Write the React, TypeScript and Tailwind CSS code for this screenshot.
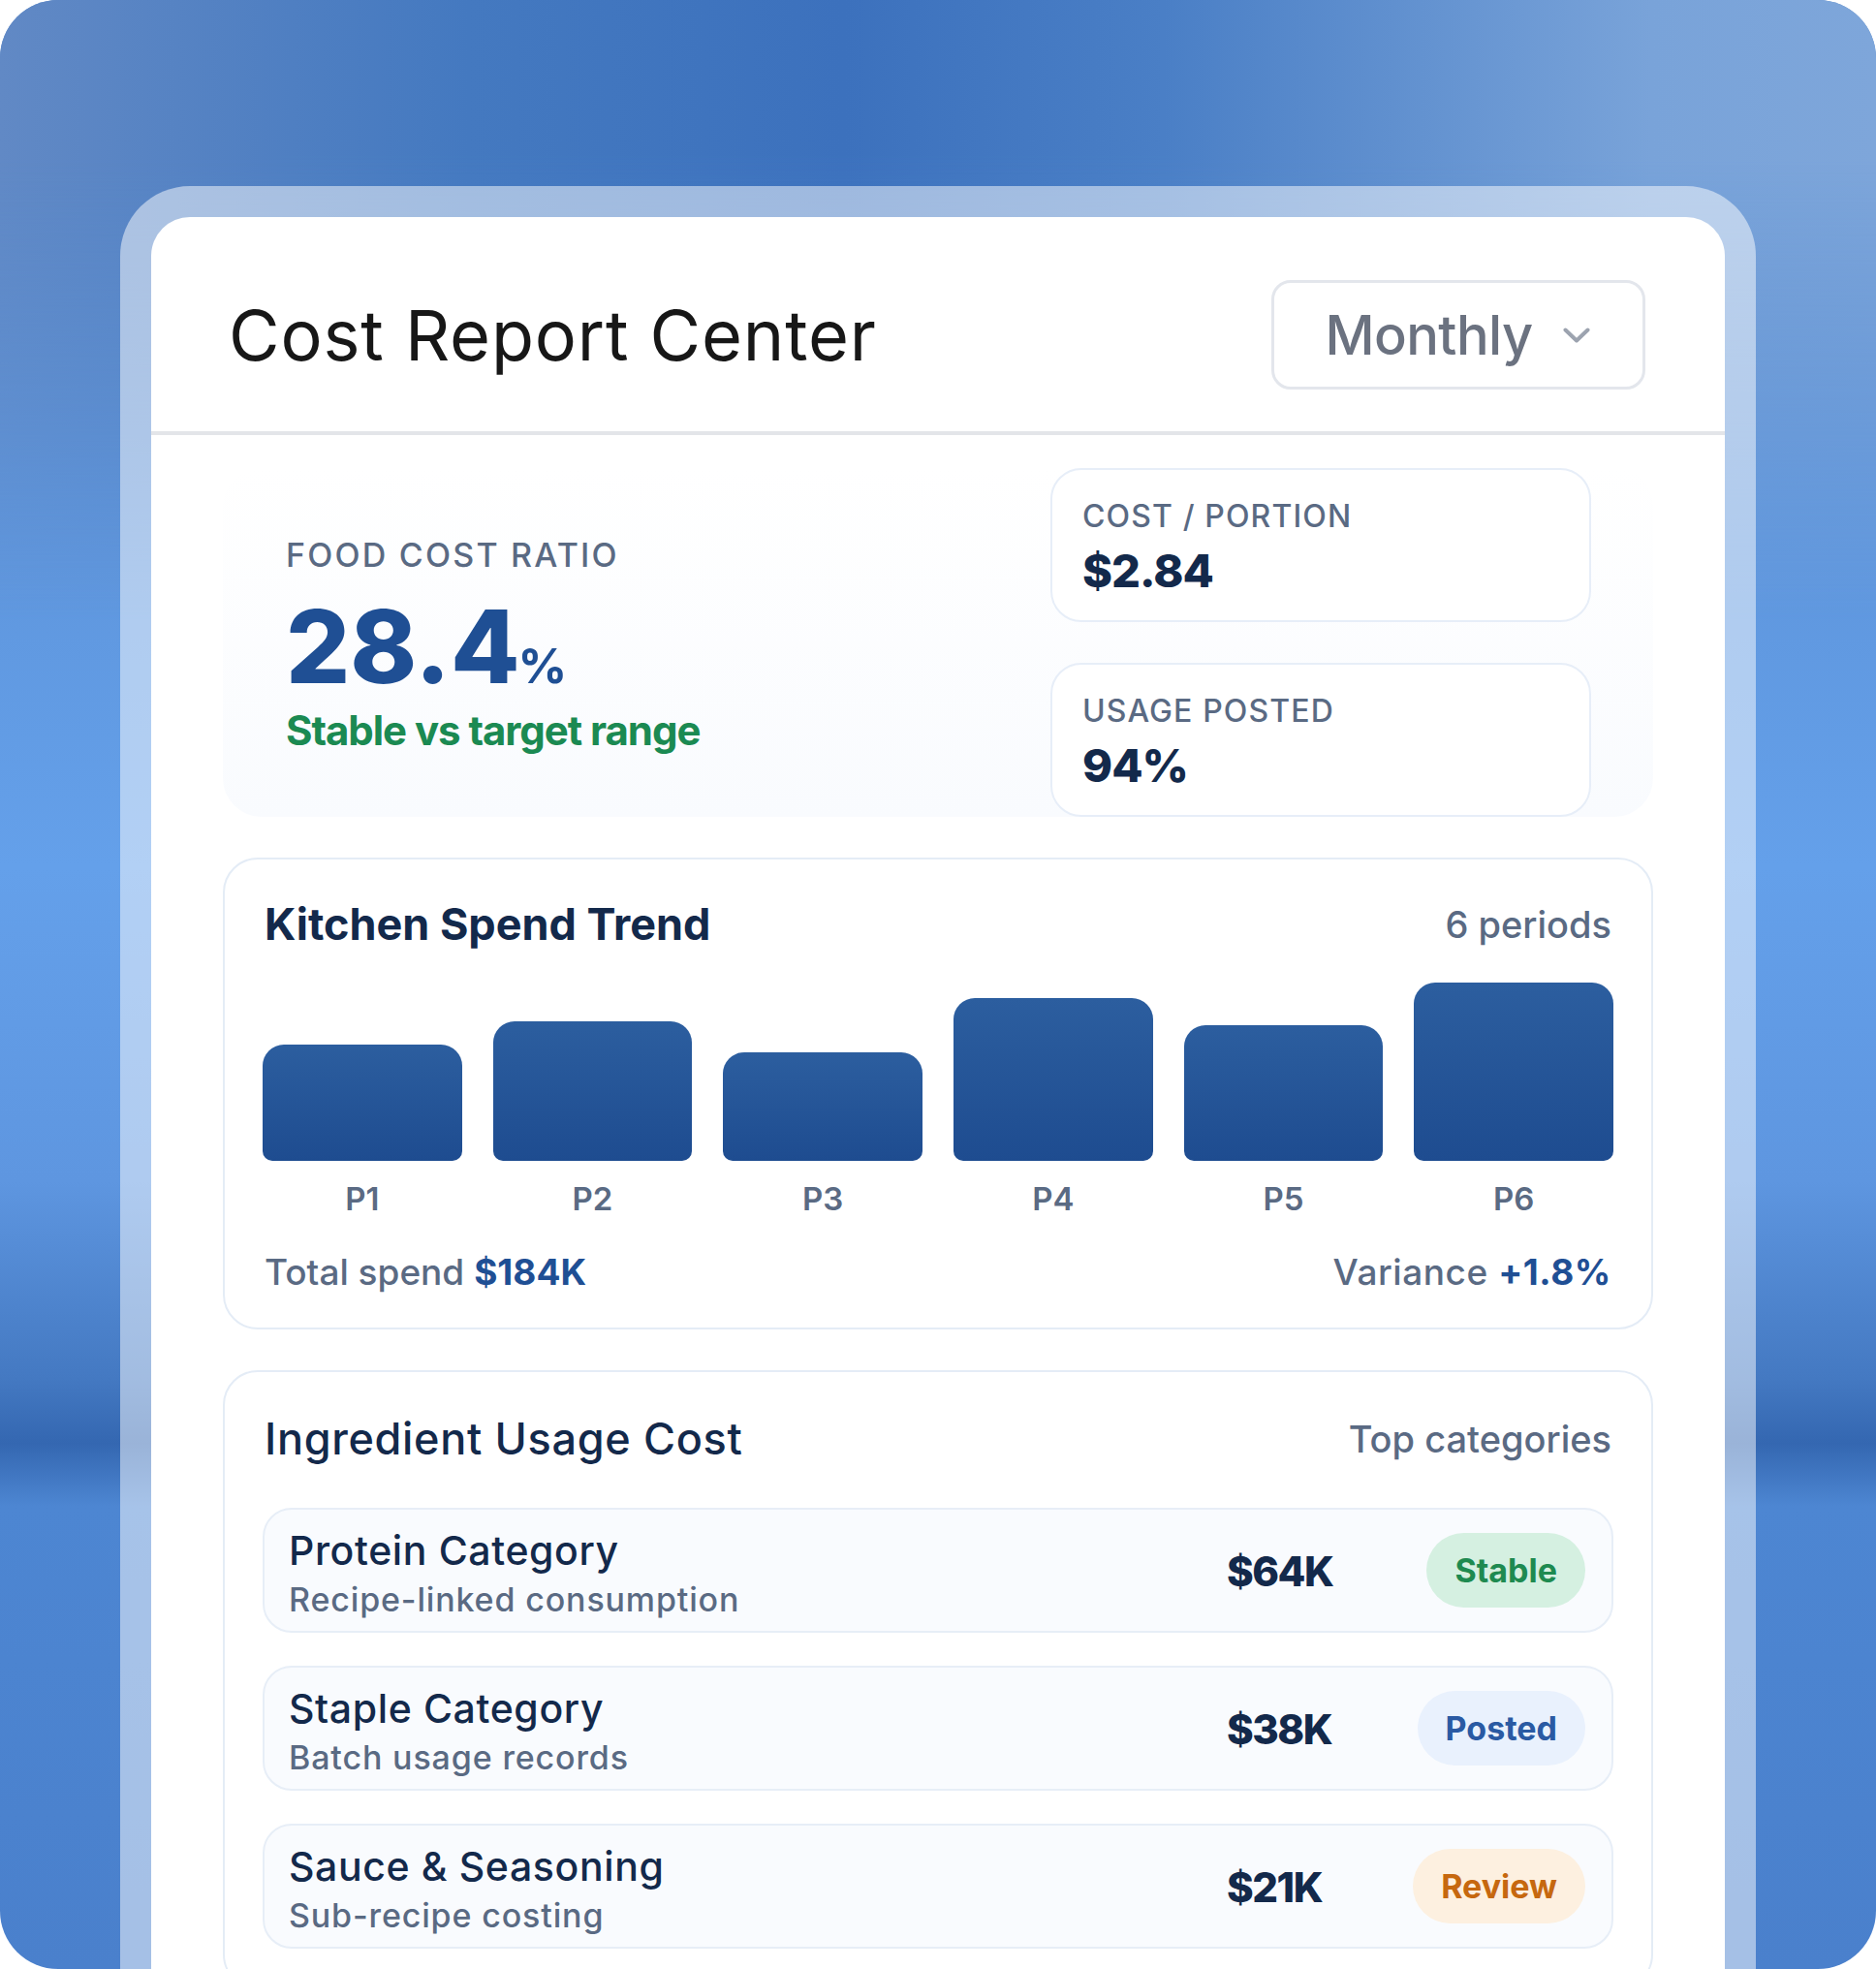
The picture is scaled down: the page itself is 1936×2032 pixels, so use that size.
import React from "react";

const bars = [
  { label: "P1", h: 120 },
  { label: "P2", h: 144 },
  { label: "P3", h: 112 },
  { label: "P4", h: 168 },
  { label: "P5", h: 140 },
  { label: "P6", h: 184 },
];

type Tone = "green" | "blue" | "amber";

const rows: { name: string; sub: string; amount: string; status: string; tone: Tone }[] = [
  { name: "Protein Category", sub: "Recipe-linked consumption", amount: "$64K", status: "Stable", tone: "green" },
  { name: "Staple Category", sub: "Batch usage records", amount: "$38K", status: "Posted", tone: "blue" },
  { name: "Sauce & Seasoning", sub: "Sub-recipe costing", amount: "$21K", status: "Review", tone: "amber" },
];

const toneClass: Record<Tone, string> = {
  green: "bg-[#d5f0e1] text-[#1e8a50]",
  blue: "bg-[#e9f1fd] text-[#2a5aa3]",
  amber: "bg-[#fdf0e0] text-[#c6680f]",
};

function Chevron() {
  return (
    <svg width="28" height="16" viewBox="0 0 28 16" fill="none" aria-hidden="true">
      <path d="M2.5 2.5 L14 13.5 L25.5 2.5" stroke="#9ca3af" strokeWidth="4" strokeLinecap="round" strokeLinejoin="round" />
    </svg>
  );
}

function MetricCard({ label, value }: { label: string; value: string }) {
  return (
    <div className="h-[159px] rounded-[32px] border-2 border-[#e7eef8] bg-white pl-[31px] pt-[32px]">
      <div className="text-[32px] leading-none font-medium tracking-[0.035em] text-[#5a6a83]">{label}</div>
      <div className="mt-[16px] text-[47px] leading-none font-extrabold tracking-[-0.02em] text-[#13294b]">{value}</div>
    </div>
  );
}

export default function App() {
  return (
    <div className="[font-family:Inter,sans-serif] bg-white">
      <div className="relative h-[2032px] w-[1936px] overflow-hidden rounded-[60px] bg-[linear-gradient(180deg,#5686c8_0%,#64a0ea_44%,#5e96e0_60%,#4479c2_70%,#3467b1_73.3%,#4d86d2_76.5%,#4a80cc_100%)]">
        {/* soft horizontal tint across the top band */}
        <div className="pointer-events-none absolute inset-x-0 top-0 h-[640px] bg-[linear-gradient(90deg,#6189c5_0%,#4479c0_25%,#3c71bd_45%,#4a7fc6_62%,#79a3d9_88%,#7ea6da_100%)] [mask-image:linear-gradient(180deg,black_0%,black_25%,transparent_100%)]" />

        <div className="relative px-[124px] pt-[192px]">
          <div className="rounded-t-[72px] bg-white/50 px-[32px] pt-[32px]">
            <div className="rounded-t-[40px] bg-white pb-[80px]">
              {/* header */}
              <header className="flex h-[225px] items-center justify-between border-b-4 border-[#e3e5e9] pl-[80px] pr-[82px] pt-[22px]">
                <h1 className="text-[72px] leading-none font-normal tracking-[0.012em] text-[#171717]">Cost Report Center</h1>
                <button className="flex h-[113px] w-[386px] items-center justify-center gap-[31px] rounded-[20px] border-[3px] border-[#e3e6ec] bg-white pr-[2px]">
                  <span className="text-[56px] leading-none font-medium tracking-[-0.01em] text-[#6b7280]">Monthly</span>
                  <Chevron />
                </button>
              </header>

              <div className="flex flex-col gap-[42px] px-[74px] pt-[34px]">
                {/* headline metrics */}
                <section className="flex rounded-[40px] bg-[linear-gradient(180deg,#ffffff_0%,#f9fbfe_100%)]">
                  <div className="flex flex-1 flex-col justify-center pl-[65px]">
                    <div className="mt-[4px] text-[34px] leading-none font-medium tracking-[0.065em] text-[#5a6a83]">FOOD COST RATIO</div>
                    <div className="mt-[25px] flex items-baseline">
                      <span className="text-[104px] leading-none font-extrabold text-[#1f4f94]">28.4</span>
                      <span className="ml-[-2px] text-[50px] leading-none font-bold text-[#1f4f94]">%</span>
                    </div>
                    <div className="mt-[14px] text-[42px] leading-none font-bold tracking-[-0.025em] text-[#1b8a52]">Stable vs target range</div>
                  </div>
                  <div className="mr-[64px] flex w-[558px] flex-col gap-[42px]">
                    <MetricCard label="COST / PORTION" value="$2.84" />
                    <MetricCard label="USAGE POSTED" value="94%" />
                  </div>
                </section>

                {/* spend trend */}
                <section className="rounded-[36px] border-2 border-[#e4ecf6] bg-white px-[39px] pb-[39px] pt-[44px]">
                  <div className="flex items-center justify-between px-[2px]">
                    <h2 className="text-[45px] leading-none font-bold text-[#13294b]">Kitchen Spend Trend</h2>
                    <span className="text-[38px] leading-none font-medium text-[#5a6a83]">6 periods</span>
                  </div>
                  <div className="mt-[22px] grid grid-cols-6 gap-x-8">
                    {bars.map((b) => (
                      <div key={b.label} className="flex flex-col items-stretch">
                        <div className="flex h-[200px] items-end">
                          <div
                            className="w-full rounded-t-[22px] rounded-b-[10px] bg-[linear-gradient(180deg,#2c5e9f_0%,#1e4c90_100%)]"
                            style={{ height: b.h }}
                          />
                        </div>
                        <div className="mt-[23px] text-center text-[33px] leading-none font-semibold text-[#5a6a83]">{b.label}</div>
                      </div>
                    ))}
                  </div>
                  <div className="mt-[40px] flex items-center justify-between px-[2px] text-[37px] leading-none font-medium text-[#5a6a83]">
                    <span>
                      Total spend <span className="font-bold text-[#1f4f94]">$184K</span>
                    </span>
                    <span className="tracking-[0.015em]">
                      Variance <span className="font-bold text-[#1f4f94]">+1.8%</span>
                    </span>
                  </div>
                </section>

                {/* ingredient usage */}
                <section className="rounded-[36px] border-2 border-[#e4ecf6] bg-white px-[39px] pb-[40px] pt-[46px]">
                  <div className="flex items-center justify-between px-[2px]">
                    <h2 className="text-[45px] leading-none font-medium tracking-[0.015em] text-[#13294b]">Ingredient Usage Cost</h2>
                    <span className="text-[38px] leading-none font-medium text-[#5a6a83]">Top categories</span>
                  </div>
                  <div className="mt-[49px] flex flex-col gap-[34px]">
                    {rows.map((r) => (
                      <div
                        key={r.name}
                        className="flex h-[129px] items-center rounded-[30px] border-2 border-[#e7eef7] bg-[#f9fbfe] pl-[25px] pr-[27px]"
                      >
                        <div className="flex flex-1 flex-col pt-[7px]">
                          <div className="text-[41px] leading-none font-medium tracking-[0.015em] text-[#13294b]">{r.name}</div>
                          <div className="mt-[13px] text-[34px] leading-none font-medium tracking-[0.025em] text-[#5a6a83]">{r.sub}</div>
                        </div>
                        <div className="w-[190px] pt-[3px] text-[42px] leading-none font-extrabold tracking-[-0.035em] text-[#13294b]">{r.amount}</div>
                        <div className="flex w-[180px] justify-end">
                          <span className={`flex h-[77px] items-center rounded-full px-[29px] text-[34px] leading-none font-bold ${toneClass[r.tone]}`}>
                            {r.status}
                          </span>
                        </div>
                      </div>
                    ))}
                  </div>
                </section>
              </div>
            </div>
          </div>
        </div>
      </div>
    </div>
  );
}
